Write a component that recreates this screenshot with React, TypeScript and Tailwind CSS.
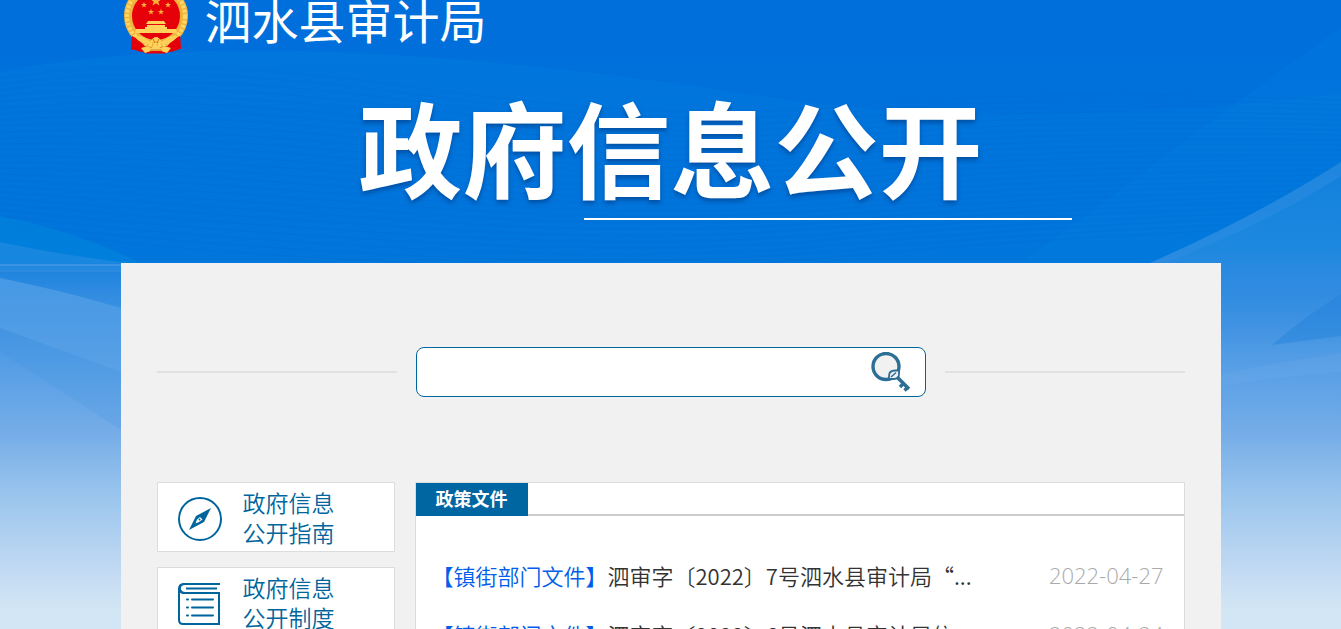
import type { ReactNode } from 'react';

const documents = [
  { tag: '【镇街部门文件】', title: '泗审字〔2022〕7号泗水县审计局“...', date: '2022-04-27' },
  { tag: '【镇街部门文件】', title: '泗审字〔2022〕6号泗水县审计局信...', date: '2022-04-24' },
];

function Backdrop() {
  const waves = Array.from({ length: 26 }, (_, i) => i);
  return (
    <svg
      className="absolute inset-0 -z-10 h-full w-full"
      viewBox="0 0 1341 629"
      preserveAspectRatio="none"
      aria-hidden="true"
    >
      <defs>
        <linearGradient id="sky" x1="0" y1="0" x2="0" y2="1">
          <stop offset="0" stopColor="#006edb" />
          <stop offset="0.415" stopColor="#0076db" />
          <stop offset="0.43" stopColor="#1f84de" />
          <stop offset="0.5" stopColor="#3f92e2" />
          <stop offset="0.6" stopColor="#5ba1e6" />
          <stop offset="0.69" stopColor="#76ade8" />
          <stop offset="0.78" stopColor="#97c3ec" />
          <stop offset="0.85" stopColor="#afd0f0" />
          <stop offset="0.91" stopColor="#c3daf3" />
          <stop offset="0.97" stopColor="#d2e6f4" />
          <stop offset="1" stopColor="#d2e6f6" />
        </linearGradient>
        <linearGradient id="glow" x1="0" y1="0" x2="0" y2="1">
          <stop offset="0" stopColor="#0082de" stopOpacity="0.4" />
          <stop offset="1" stopColor="#0078dc" stopOpacity="0" />
        </linearGradient>
        <linearGradient id="beam" x1="0" y1="0" x2="0" y2="1">
          <stop offset="0" stopColor="#6fb0ec" stopOpacity="0.45" />
          <stop offset="1" stopColor="#6fb0ec" stopOpacity="0.1" />
        </linearGradient>
        <linearGradient id="ridge" x1="0" y1="0" x2="0" y2="1">
          <stop offset="0" stopColor="#1180dc" />
          <stop offset="0.45" stopColor="#1d88df" />
          <stop offset="0.6" stopColor="#2c8ae0" />
          <stop offset="1" stopColor="#3f92e2" stopOpacity="0" />
        </linearGradient>
      </defs>
      <rect width="1341" height="629" fill="url(#sky)" />
      <path d="M0 72Q140 45 330 52T760 96T1341 94V230H0Z" fill="url(#glow)" />
      <path d="M1341 28Q1240 98 1100 205L1020 263H1341Z" fill="#0082de" opacity="0.22" />
      <g fill="none" stroke="#005fc8" strokeOpacity="0.16">
        {waves.map((i) => (
          <path
            key={i}
            d={`M0 ${78 + i * 6}Q170 ${52 + i * 8} 420 ${88 + i * 7}T850 ${106 + i * 6}T1341 ${100 + i * 5}`}
          />
        ))}
      </g>
      <path d="M0 216Q80 232 140 263H0Z" fill="#0087de" opacity="0.5" />
      <path d="M0 242Q60 255 130 263V272H0Z" fill="#3a93e3" opacity="0.4" />
      <path d="M0 264H121V266H0Z" fill="#589fe7" opacity="0.5" />
      <path d="M0 278Q60 290 121 308V372Q60 350 0 328Z" fill="url(#beam)" />
      <path d="M0 328Q60 350 121 372V430Q60 390 0 352Z" fill="#368ddd" opacity="0.15" />
      <path d="M1341 162Q1260 214 1150 263H1221V350H1341Z" fill="url(#ridge)" />
      <path d="M1341 162Q1260 214 1150 263H1165Q1270 222 1341 176Z" fill="#358ee3" opacity="0.4" />
      <path d="M1341 294Q1300 320 1272 345L1341 336Z" fill="#1f80da" opacity="0.4" />
      <path d="M1221 374Q1280 362 1341 353V372Q1280 376 1221 386Z" fill="#79b0ea" opacity="0.2" />
    </svg>
  );
}

const STAR = 'M0 -1L0.24 -0.31L0.95 -0.31L0.38 0.12L0.59 0.81L0 0.38L-0.59 0.81L-0.38 0.12L-0.95 -0.31L-0.24 -0.31Z';

function Emblem() {
  return (
    <svg className="h-[72px] w-[66px] shrink-0" viewBox="0 0 66 72" aria-hidden="true">
      <path d="M9 48L8 68Q14 66 17 69L24 71.500H42L49 69Q52 66 58 67L57 48Z" fill="#e40008" />
      <circle cx="33" cy="34" r="28" fill="#e60009" stroke="#f0b43c" strokeWidth="8" />
      <circle cx="33" cy="34" r="29" fill="none" stroke="#ffd766" strokeWidth="4" strokeDasharray="3 1.500" />
      <path d="M9 54Q18 58 22 65L18 70L9 67Z" fill="#e40008" />
      <path d="M57 54Q48 58 44 65L48 70L57 67Z" fill="#e40008" />
      <g fill="#ffb03b">
        <path d={STAR} transform="translate(33 19) scale(6)" />
        <path d={STAR} transform="translate(21 23) scale(3.200)" />
        <path d={STAR} transform="translate(45 23) scale(3.200)" />
        <path d={STAR} transform="translate(28 30) scale(3.200)" />
        <path d={STAR} transform="translate(38 30) scale(3.200)" />
      </g>
      <g fill="#ffd25c">
        <path d="M25 39H41L43 42H23ZM24 43H42V46H24ZM22 45H44V50H22ZM13 47H53L54 51H12Z" />
      </g>
      <path d="M11 54Q22 53 27 60Q33 50 39 60Q44 53 55 54Q48 63 39 62L33 59L27 62Q18 63 11 54Z" fill="#ffcf57" />
      <path d="M18 66Q25 63 28 66Q33 61 38 66Q41 63 48 66L44 71L38 69H28L22 71Z" fill="#ffd25c" />
      <path d="M30 57L32 61M36 57L34 61M27 68H39" stroke="#c9791c" fill="none" />
    </svg>
  );
}

function SearchIcon() {
  return (
    <svg className="h-10 w-10" viewBox="0 0 40 40" fill="none" stroke="#2d6e97" aria-hidden="true">
      <circle cx="15" cy="14.500" r="13" fill="#f1f1f1" strokeWidth="3.400" />
      <path d="M18 26V24Q18 18.500 24 18.500H28V22Q28 27 23 27H18Z" fill="#f1f1f1" strokeWidth="1.800" />
      <path d="M20 25L25 20.500" strokeWidth="1.500" />
      <path d="M26 25L38 37" strokeWidth="3.600" />
      <path d="M33 31L29 35M37 35L33.500 38.500" strokeWidth="3.400" />
    </svg>
  );
}

function CompassIcon() {
  return (
    <svg className="h-11 w-11 shrink-0" viewBox="0 0 44 44" fill="none" aria-hidden="true">
      <circle cx="22" cy="22" r="21" stroke="#00659c" strokeWidth="2" />
      <path d="M33 11L26 25L11 33L18 19Z" fill="#00659c" />
      <path d="M22 20L24.500 22.500L21 25L17.500 26.500L19 22.500Z" fill="#fff" />
      <circle cx="21.500" cy="22.500" r="1" fill="#00659c" />
    </svg>
  );
}

function BookIcon() {
  return (
    <svg className="h-11 w-11 shrink-0" viewBox="0 0 44 44" fill="none" stroke="#00659c" strokeWidth="2" aria-hidden="true">
      <path d="M42 2H6Q1 2 1 7V38Q1 42 5 42H41V11H6Q2 11 2 7" />
      <path d="M42 2H6Q1 3 2 8Q3 11 7 11H41" />
      <path d="M8 6.500H39" />
      <path d="M14 17.500H35M14 25.500H35M14 33.500H35" strokeLinecap="round" />
      <path d="M9 17.500H10M9 25.500H10M9 33.500H10" strokeLinecap="round" />
    </svg>
  );
}

function GuideLink({ icon, lines }: { icon: ReactNode; lines: [string, string] }) {
  return (
    <a
      href="#"
      className="flex h-[70px] items-center gap-[21px] border border-[#dcdcdc] bg-white pt-1 pl-5 text-[23px] leading-[30px] font-[350] text-[#00659c]"
    >
      {icon}
      <span className="-mt-1">
        {lines[0]}
        <br />
        {lines[1]}
      </span>
    </a>
  );
}

export default function App() {
  return (
    <div className="relative isolate h-screen overflow-hidden font-['Noto_Sans_CJK_SC',sans-serif]">
      <Backdrop />
      <div className="mx-auto max-w-[1100px]">
        <header>
          <div className="-mt-[18px] flex h-[75px] items-start gap-4 pl-0.5">
            <Emblem />
            <p className="pt-1 text-[47px] leading-[66px] whitespace-nowrap text-white">泗水县审计局</p>
          </div>
          <h1 className="h-[161px] text-center text-[104px] leading-[178px] font-bold whitespace-nowrap text-white [text-shadow:0_3px_4px_#00388099]">
            政府信息公开
          </h1>
          <div className="mr-[149px] ml-auto h-0.5 w-[488px] bg-white" />
        </header>

        <main className="mt-[43px] min-h-screen bg-[#f1f1f1] px-9 pt-[84px]">
          <form className="flex items-center gap-[19px]" role="search">
            <span className="h-0.5 flex-1 bg-[#e1e1e1]" />
            <div className="flex h-[50px] w-[510px] items-center rounded-lg border border-[#00659c] bg-white pr-3.5 pl-4">
              <input type="search" aria-label="搜索" className="h-full min-w-0 flex-1 text-lg outline-none" />
              <button type="submit" aria-label="搜索">
                <SearchIcon />
              </button>
            </div>
            <span className="h-0.5 flex-1 bg-[#e1e1e1]" />
          </form>

          <div className="mt-[85px] flex gap-5">
            <nav className="flex w-[238px] shrink-0 flex-col gap-[15px]">
              <GuideLink icon={<CompassIcon />} lines={['政府信息', '公开指南']} />
              <GuideLink icon={<BookIcon />} lines={['政府信息', '公开制度']} />
            </nav>

            <section className="min-h-[400px] min-w-0 flex-1 border border-[#dcdcdc] bg-white">
              <div className="flex h-[33px] border-b-2 border-[#ccc]">
                <h2 className="-mb-0.5 h-[33px] bg-[#0066a1] px-5 text-lg leading-[31px] font-bold text-white">
                  政策文件
                </h2>
              </div>
              <ul className="pt-[30px] pr-5 pl-4">
                {documents.map((doc) => (
                  <li key={doc.date} className="flex h-[59px] items-center justify-between text-[22px] font-[350]">
                    <a href="#" className="whitespace-nowrap text-[#333]">
                      <span className="text-[#005eea]">{doc.tag}</span>
                      {doc.title}
                    </a>
                    <time className="font-['Open_Sans','Noto_Sans',sans-serif] font-light text-[#aaa]">{doc.date}</time>
                  </li>
                ))}
              </ul>
            </section>
          </div>
        </main>
      </div>
    </div>
  );
}
